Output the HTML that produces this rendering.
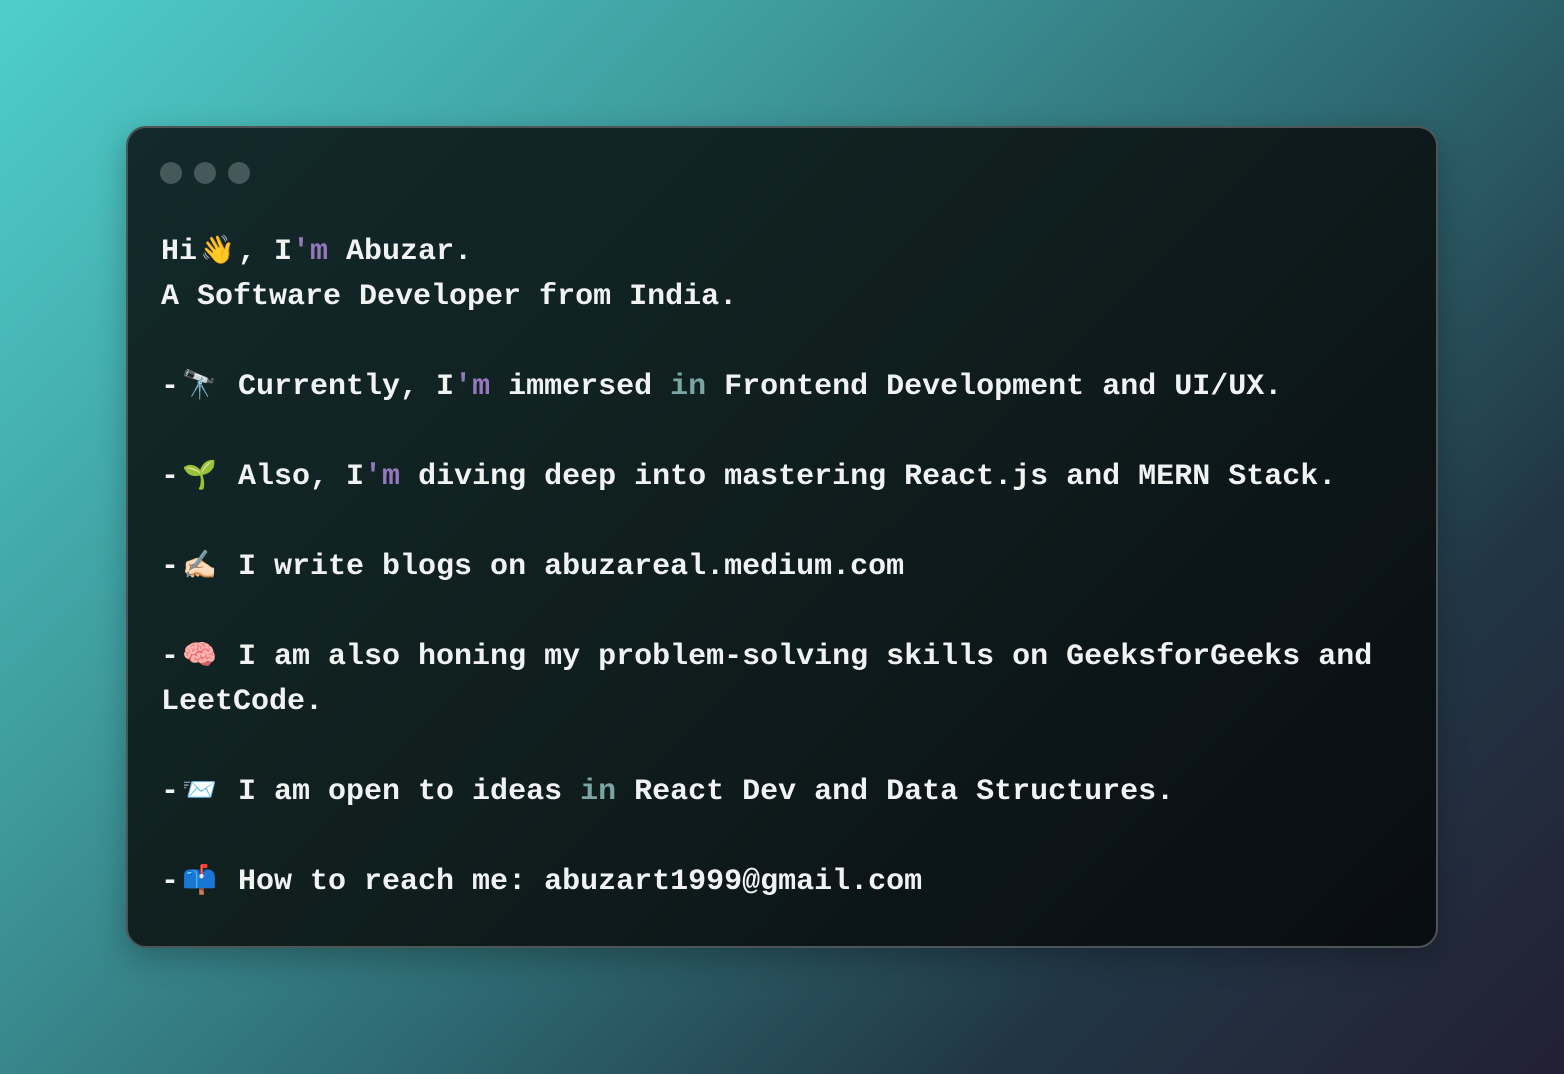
<!DOCTYPE html>
<html><head><meta charset="utf-8"><style>
html,body{margin:0;padding:0}
body{width:1564px;height:1074px;overflow:hidden;position:relative;
background:linear-gradient(135deg,#4ecfcb 0%,#3f9c9e 30%,#2e6a72 55%,#213645 78%,#231f33 100%);}
.win{position:absolute;left:126px;top:126px;width:1308px;height:818px;border:2px solid #4e5556;border-radius:20px;
background:linear-gradient(135deg,#13292b 0%,#10201f 40%,#0c1518 75%,#090d12 100%);box-shadow:0 10px 30px rgba(0,0,0,.25)}
.dot{position:absolute;top:34px;width:22px;height:22px;border-radius:50%;background:#45585a}
.txt{position:absolute;left:33px;top:102px;width:1260px;font-family:"Liberation Mono",monospace;font-weight:bold;font-size:30px;line-height:45px;color:#f1f3f3;white-space:pre-wrap}
.p{color:#9479bf}.t{color:#7aa5a3}
.e{display:inline-block;width:41px;text-align:center;font-size:28px;font-weight:normal}
</style></head><body>
<div class="win">
<div class="dot" style="left:32px"></div><div class="dot" style="left:66px"></div><div class="dot" style="left:100px"></div>
<div class="txt">Hi<span class="e">👋</span>, I<span class="p">'m</span> Abuzar.
A Software Developer from India.

-<span class="e">🔭</span> Currently, I<span class="p">'m</span> immersed <span class="t">in</span> Frontend Development and UI/UX.

-<span class="e">🌱</span> Also, I<span class="p">'m</span> diving deep into mastering React.js and MERN Stack.

-<span class="e">✍🏻</span> I write blogs on abuzareal.medium.com

-<span class="e">🧠</span> I am also honing my problem-solving skills on GeeksforGeeks and
LeetCode.

-<span class="e">📨</span> I am open to ideas <span class="t">in</span> React Dev and Data Structures.

-<span class="e">📫</span> How to reach me: abuzart1999@gmail.com</div>
</div>
</body></html>
